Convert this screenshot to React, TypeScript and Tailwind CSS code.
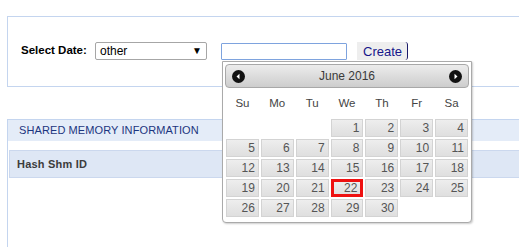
import React from "react";

const weeks: (number | null)[][] = [
  [null, null, null, 1, 2, 3, 4],
  [5, 6, 7, 8, 9, 10, 11],
  [12, 13, 14, 15, 16, 17, 18],
  [19, 20, 21, 22, 23, 24, 25],
  [26, 27, 28, 29, 30, null, null],
];

const dayNames = ["Su", "Mo", "Tu", "We", "Th", "Fr", "Sa"];

function Arrow({ dir }: { dir: "left" | "right" }) {
  return (
    <svg width="13" height="13" viewBox="0 0 13 13">
      <circle cx="6.5" cy="6.5" r="6.5" fill="#111" />
      {dir === "left" ? (
        <polygon points="4.5,6.5 7.5,3.8 7.5,9.2" fill="#fff" />
      ) : (
        <polygon points="8.5,6.5 5.5,3.8 5.5,9.2" fill="#fff" />
      )}
    </svg>
  );
}

export default function App() {
  return (
    <div className="relative w-[519px] h-[247px] overflow-hidden bg-white font-['Liberation_Sans',Arial,sans-serif]">
      <div className="pt-[16px] pl-[7px]">
        {/* Top panel */}
        <div className="h-[71px] border border-r-0 border-[#c4d5ef] pl-[13px] pt-[25px]">
          <div className="flex items-center">
            <span className="w-[68px] text-[11.5px] font-bold text-black leading-none whitespace-nowrap">Select Date:</span>
            <div className="ml-[6px] w-[112px] h-[18px] border border-[#a6a6a6] rounded-[2px] flex items-center justify-between pl-[4px] pr-[4px]">
              <span className="text-[12px] text-black leading-none">other</span>
              <span className="text-[10px] text-black leading-none">▼</span>
            </div>
            <div className="ml-[14px] w-[126px] h-[17px] border border-[#7ea3de] rounded-[1px]" />
            <div className="ml-[10px] h-[18px] flex items-center bg-[#eeeeee] pl-[6px] pr-[5px] rounded-r-[3px] border-r border-[#1a1a6a]">
              <span className="text-[13px] text-[#16168a] leading-none">Create</span>
            </div>
          </div>
        </div>

        {/* Second panel */}
        <div className="mt-[32px] h-[200px] border-l border-t border-[#c4d5ef]">
          <div className="h-[21px] bg-[#e4ecf8] flex items-center pl-[11px]">
            <span className="text-[11px] text-[#1c3580] leading-none tracking-[0.1px]">SHARED MEMORY INFORMATION</span>
          </div>
          <div className="mt-[9px] ml-[1px] h-[28px] bg-[#dee7f5] border-t border-l border-b border-[#cbd8ee] flex items-center pl-[7px]">
            <span className="text-[11px] font-bold text-[#3c3c3c] leading-none tracking-[0.2px]">Hash Shm ID</span>
          </div>
        </div>
      </div>

      {/* Datepicker popup */}
      <div className="absolute left-[222px] top-[61px] w-[250px] h-[162px] bg-white border border-[#aaaaaa] rounded-b-[4px] shadow-[1px_1px_2px_rgba(0,0,0,0.2)] p-[2px]">
        <div className="h-[24px] border border-[#a8a8a8] rounded-[4px] bg-gradient-to-b from-[#ececec] to-[#cdcdcd] flex items-center justify-between px-[6px]">
          <Arrow dir="left" />
          <span className="text-[12px] text-[#3a3a3a] leading-none">June 2016</span>
          <Arrow dir="right" />
        </div>
        <div className="grid grid-cols-7 h-[30px] items-center">
          {dayNames.map((d) => (
            <span key={d} className="text-center text-[11.5px] text-[#444] leading-none pt-[1px]">
              {d}
            </span>
          ))}
        </div>
        <div className="flex flex-col">
          {weeks.map((w, i) => (
            <div key={i} className="grid grid-cols-7">
              {w.map((d, j) => (
                <div key={j} className="p-[1px] h-[20px]">
                  {d !== null && (
                    <div
                      className={
                        "h-full flex items-center justify-end pr-[3px] text-[12px] leading-none text-[#555] bg-gradient-to-b from-[#eeeeee] via-[#e6e6e6] to-[#dfdfdf] " +
                        (d === 22 ? "border-[3px] border-[#ee1111] pr-[1px]" : "border border-[#d3d3d3]")
                      }
                    >
                      {d}
                    </div>
                  )}
                </div>
              ))}
            </div>
          ))}
        </div>
      </div>
    </div>
  );
}
